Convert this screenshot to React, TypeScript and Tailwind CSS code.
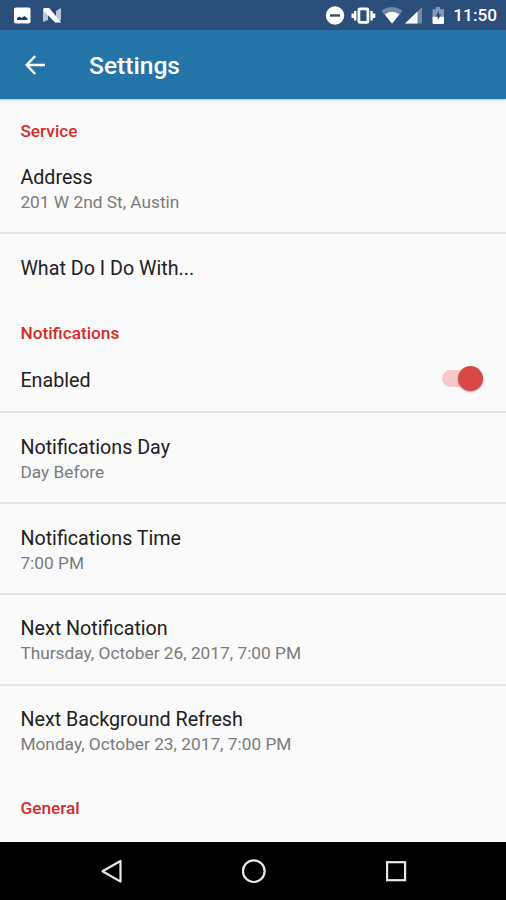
import React from "react";

type RowProps = { title: string; summary?: string; className: string; children?: React.ReactNode };

function Row({ title, summary, className, children }: RowProps) {
  return (
    <div className={`flex shrink-0 items-start justify-between pl-[20.4px] pr-[23px] ${className}`}>
      <div>
        <div className="text-[19.7px] leading-[24px] text-[#212121]">{title}</div>
        {summary && (
          <div className="text-[17.3px] leading-[25px] text-[#7c7c7c]">{summary}</div>
        )}
      </div>
      {children}
    </div>
  );
}

function Section({ label, className }: { label: string; className: string }) {
  return (
    <h2 className={`shrink-0 pl-[20.4px] text-[17.25px] font-medium leading-[20px] text-[#d62b2b] ${className}`}>
      {label}
    </h2>
  );
}

function Switch() {
  return (
    <div className="flex h-[18px] items-center">
      <div className="flex h-[17px] w-[41px] items-center justify-end rounded-full bg-[#f4cbca]">
        <div className="size-[25px] shrink-0 rounded-full bg-[#d74743] shadow-[0_1px_2px_rgba(0,0,0,0.35)]" />
      </div>
    </div>
  );
}

function StatusBar() {
  return (
    <div className="flex h-[30px] shrink-0 items-center justify-between bg-[#2b4e7a]">
      <svg width="70" height="30" viewBox="0 0 70 30">
        <rect x="14" y="7.5" width="16.5" height="16" rx="1.8" fill="#fff" />
        <path d="M17 20v-2l2.5-1.5 2 1.5 3-2 3 2.5V20z" fill="#1f376b" />
        <path d="M43 10l5-1v11l-5 2zM56 11l5-3v12l-5 2z" fill="#b9c5d8" />
        <path d="M43.6 8h5.6l12 14.5h-6L43.2 10.5z" fill="#fff" />
      </svg>
      <div className="flex h-[30px] items-center pr-[9px]">
        <svg width="127" height="30" viewBox="320 0 127 30">
          <circle cx="335" cy="15.5" r="9.2" fill="#fff" />
          <path d="M330 15.5h10" stroke="#2b4e7a" strokeWidth="2.4" />
          <rect x="358.9" y="8.8" width="9" height="13.6" rx="1" fill="none" stroke="#fff" strokeWidth="2.8" />
          <path d="M355.2 11v9.5M371.6 11v9.5M352.7 13.5v4.5M374.1 13.5v4.5" stroke="#fff" strokeWidth="2.4" />
          <path d="M381.5 10.8Q391.8 3.2 402.5 10.8L392 23.5z" fill="#7189aa" />
          <path d="M384.8 14.5Q392 9 399.5 14.5L392 23.5z" fill="#fff" />
          <path d="M405 23.5L422 7v16.5z" fill="#7189aa" />
          <path d="M405 23.5L417.5 11.4v12.1z" fill="#fff" />
          <path d="M432.5 9.2h3.3V7h4.4v2.2h3.8v7h-11.5z" fill="#8498b5" />
          <path d="M432.5 16.5h11.5v6.5a1 1 0 01-1 1h-9.5a1 1 0 01-1-1z" fill="#fff" />
          <path d="M438.9 10.5l-3.4 6.1h2.2v3.4l3.4-5.6h-2.2z" fill="#2b4e7a" />
        </svg>
        <span className="ml-[6px] text-[17.22px] font-medium leading-[30px] text-white">11:50</span>
      </div>
    </div>
  );
}

export default function App() {
  return (
    <div className="flex h-[900px] w-[506px] flex-col overflow-hidden bg-[#fafafa] font-[Roboto,sans-serif]">
      <StatusBar />
      <header className="z-10 flex h-[69px] shrink-0 items-center bg-[#2474a8] pl-[25px] shadow-[0_1px_2px_rgba(0,0,0,0.25)]">
        <svg width="20" height="20" viewBox="0 0 20 20" fill="none" stroke="#fff" strokeWidth="2.4">
          <path d="M20 10H2M10.2 1L1.6 10l8.6 9" />
        </svg>
        <h1 className="ml-[44px] pt-[3px] text-[24.6px] font-medium leading-[30px] text-white">Settings</h1>
      </header>
      <main className="flex h-[743px] shrink-0 flex-col">
        <Section label="Service" className="mt-[22px]" />
        <Row title="Address" summary="201 W 2nd St, Austin" className="h-[93px] border-b-2 border-[#e4e4e4] pt-[25px]" />
        <Row title="What Do I Do With..." className="h-[68px] pt-[23px]" />
        <Section label="Notifications" className="mt-[21px]" />
        <Row title="Enabled" className="h-[70px] border-b-2 border-[#e4e4e4] pt-[26px]">
          <Switch />
        </Row>
        <Row title="Notifications Day" summary="Day Before" className="h-[91px] border-b-2 border-[#e4e4e4] pt-[23px]" />
        <Row title="Notifications Time" summary="7:00 PM" className="h-[91px] border-b-2 border-[#e4e4e4] pt-[23px]" />
        <Row title="Next Notification" summary="Thursday, October 26, 2017, 7:00 PM" className="h-[91px] border-b-2 border-[#e4e4e4] pt-[22px]" />
        <Row title="Next Background Refresh" summary="Monday, October 23, 2017, 7:00 PM" className="h-[90px] pt-[22px]" />
        <Section label="General" className="mt-[22px]" />
      </main>
      <nav className="flex h-[58px] shrink-0 bg-black">
        <svg width="506" height="58" viewBox="0 842 506 58" fill="none" stroke="#e8e8e8" strokeWidth="2.2">
          <path d="M102.5 871.2L120.5 861v20.6z" strokeLinejoin="round" />
          <circle cx="253.8" cy="871.2" r="10.8" />
          <rect x="387.1" y="862.2" width="18" height="18" />
        </svg>
      </nav>
    </div>
  );
}
